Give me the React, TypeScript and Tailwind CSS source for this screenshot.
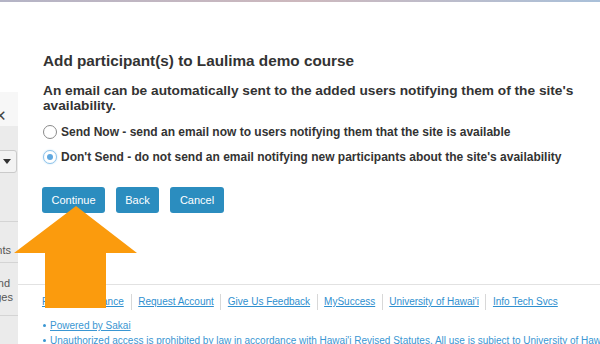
import React from "react";

function Radio({ checked }: { checked?: boolean }) {
  return checked ? (
    <span className="w-[14px] h-[14px] rounded-full border border-[#8ec3ea] bg-white flex items-center justify-center shrink-0 shadow-[0_0_2px_#bfe0f7]">
      <span className="w-[6px] h-[6px] rounded-full bg-[#5fa8e0]" />
    </span>
  ) : (
    <span className="w-[14px] h-[14px] rounded-full border border-[#8a8a8a] bg-white shrink-0" />
  );
}

export default function App() {
  const links = [
    "Policy & Guidance",
    "Request Account",
    "Give Us Feedback",
    "MySuccess",
    "University of Hawai'i",
    "Info Tech Svcs",
  ];
  return (
    <div className="w-[600px] h-[344px] overflow-hidden bg-white relative font-['Liberation_Sans',Arial,sans-serif] text-[#333]">
      <div className="h-[2px] bg-gradient-to-r from-[#b4b4c6] via-[#cdb8bd] to-[#a9c0d9]" />
      <div className="flex h-[342px]">
        <aside className="w-[18px] shrink-0 flex flex-col overflow-hidden">
          <div className="h-[90px] bg-white shrink-0" />
          <div className="h-[34px] bg-[#f7f7f7] relative overflow-hidden shrink-0">
            <span className="absolute left-[-6px] top-[16px] text-[#444] text-[15px] leading-none">✕</span>
          </div>
          <div className="flex-1 bg-[#ebebeb] flex flex-col text-[11px] text-[#555]">
            <div className="h-[24px] shrink-0" />
            <div className="ml-[-6px] w-[23px] h-[23px] border border-[#cacaca] rounded-[3px] bg-[#f3f3f3] flex items-center justify-center shrink-0">
              <svg width="8" height="5" viewBox="0 0 8 5" className="ml-[3px]">
                <polygon points="0,0 8,0 4,5" fill="#333" />
              </svg>
            </div>
            <div className="h-[49px] border-b border-[#d4d4d4] shrink-0" />
            <div className="h-[41px] border-b border-[#d4d4d4] flex items-end justify-end pr-[7px] pb-[4px] whitespace-nowrap overflow-hidden shrink-0">
              Participants
            </div>
            <div className="h-[53px] border-b border-[#d4d4d4] flex flex-col items-end justify-center pt-[2px] leading-[14px] whitespace-nowrap overflow-hidden shrink-0">
              <span className="pr-[8px]">Groups and</span>
              <span className="pr-[5px]">Pages</span>
            </div>
          </div>
        </aside>
        <main className="flex-1 flex flex-col min-w-0 overflow-hidden">
          <div className="pl-[25px]">
            <h1 className="mt-[49px] text-[15.3px] leading-[20px] font-bold">
              Add participant(s) to Laulima demo course
            </h1>
            <p className="mt-[12px] text-[13.7px] leading-[15px] font-bold pr-[10px]">
              An email can be automatically sent to the added users notifying them of the site's availability.
            </p>
            <div className="mt-[9px] flex flex-col gap-[5px] text-[12px] font-bold">
              <label className="h-[20px] flex items-center gap-[4px] whitespace-nowrap">
                <Radio />
                <span>Send Now - send an email now to users notifying them that the site is available</span>
              </label>
              <label className="h-[20px] flex items-center gap-[4px] whitespace-nowrap">
                <Radio checked />
                <span>Don't Send - do not send an email notifying new participants about the site's availability</span>
              </label>
            </div>
            <div className="mt-[20px] flex gap-[11px] -ml-[1px]">
              <button className="h-[26px] w-[63px] rounded-[3px] bg-[#2b8dbf] text-white text-[11px] flex items-center justify-center">
                Continue
              </button>
              <button className="h-[26px] w-[43px] rounded-[3px] bg-[#2b8dbf] text-white text-[11px] flex items-center justify-center">
                Back
              </button>
              <button className="h-[26px] w-[54px] rounded-[3px] bg-[#2b8dbf] text-white text-[11px] flex items-center justify-center">
                Cancel
              </button>
            </div>
          </div>
          <footer className="mt-[71px] border-t border-[#e2e2e2] pl-[24px] pt-[9px] text-[10px]">
            <div className="flex items-center h-[16px]">
              {links.map((l, i) => (
                <span
                  key={l}
                  className={
                    i === 0
                      ? "pr-[7px] leading-[16px] shrink-0"
                      : "px-[6.5px] border-l border-[#d8d8d8] leading-[16px] shrink-0"
                  }
                >
                  <a className="text-[#2f8fcf] underline whitespace-nowrap">{l}</a>
                </span>
              ))}
            </div>
            <ul className="mt-[8px] leading-[15px] text-[#3a96d2]">
              <li className="flex items-center gap-[3px] whitespace-nowrap">
                <span className="w-[3px] h-[3px] rounded-full bg-[#3a96d2] ml-[1px] mr-[1px] shrink-0" />
                <a className="underline shrink-0">Powered by Sakai</a>
              </li>
              <li className="flex items-center gap-[3px] whitespace-nowrap">
                <span className="w-[3px] h-[3px] rounded-full bg-[#3a96d2] ml-[1px] mr-[1px] shrink-0" />
                <span className="shrink-0">
                  Unauthorized access is prohibited by law in accordance with Hawai'i Revised Statutes. All use is subject to University of Hawai'i Executive Policy.
                </span>
              </li>
            </ul>
          </footer>
        </main>
      </div>
      <svg className="absolute left-0 top-0 pointer-events-none" width="600" height="344" viewBox="0 0 600 344">
        <polygon points="76,206 137,253 106,253 106,308 45,308 45,253 14,253" fill="#fb9b0d" />
      </svg>
    </div>
  );
}
